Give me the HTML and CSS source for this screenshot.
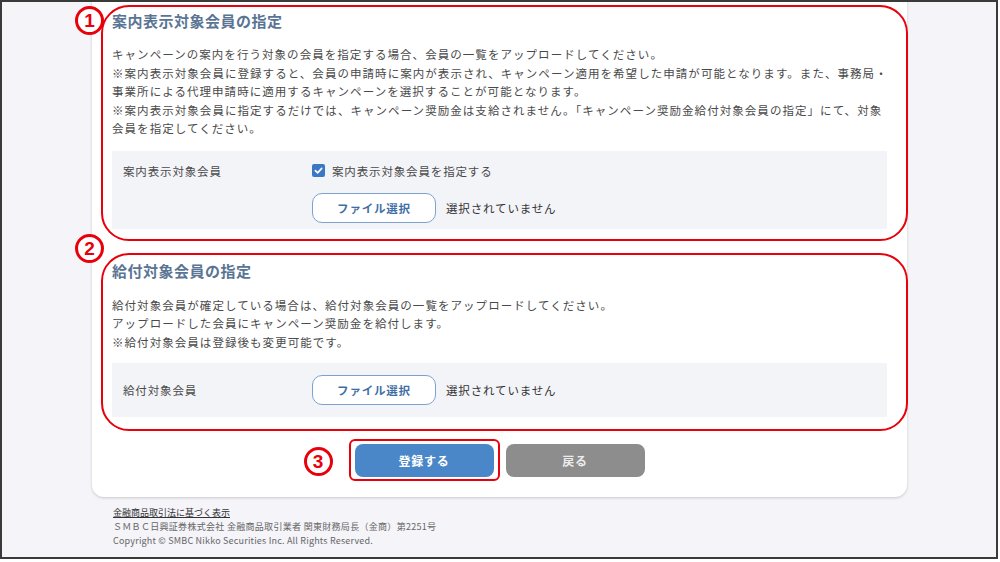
FILE: index.html
```html
<html>
<head>
    <title>キャンペーン会員の指定</title>
    <link rel="stylesheet" href="styles.css">
</head>
<body>
    <div class="frame">
        <div class="card">

            <div class="mark mark-1">
                <span class="num num-1">1</span>
                <h2 class="sec-title">案内表示対象会員の指定</h2>
                <p class="desc">キャンペーンの案内を行う対象の会員を指定する場合、会員の一覧をアップロードしてください。<br>※案内表示対象会員に登録すると、会員の申請時に案内が表示され、キャンペーン適用を希望した申請が可能となります。また、事務局・<br>事業所による代理申請時に適用するキャンペーンを選択することが可能となります。<br>※案内表示対象会員に指定するだけでは、キャンペーン奨励金は支給されません。「キャンペーン奨励金給付対象会員の指定」にて、対象<br>会員を指定してください。</p>
                <div class="form-row row-1">
                    <div class="label">案内表示対象会員</div>
                    <div class="field">
                        <label class="check">
                            <span class="box">
                                <svg width="9" height="9" viewBox="0 0 10 10"><path d="M1.5 5.2 L4 7.6 L8.6 2.6" fill="none" stroke="#fff" stroke-width="1.8" stroke-linecap="round" stroke-linejoin="round"/></svg>
                            </span>
                            案内表示対象会員を指定する
                        </label>
                        <div class="file">
                            <button class="file-btn">ファイル選択</button>
                            <span class="file-name">選択されていません</span>
                        </div>
                    </div>
                </div>
            </div>

            <div class="mark mark-2">
                <span class="num num-2">2</span>
                <h2 class="sec-title">給付対象会員の指定</h2>
                <p class="desc">給付対象会員が確定している場合は、給付対象会員の一覧をアップロードしてください。<br>アップロードした会員にキャンペーン奨励金を給付します。<br>※給付対象会員は登録後も変更可能です。</p>
                <div class="form-row row-2">
                    <div class="label">給付対象会員</div>
                    <div class="field">
                        <div class="file">
                            <button class="file-btn">ファイル選択</button>
                            <span class="file-name">選択されていません</span>
                        </div>
                    </div>
                </div>
            </div>

            <div class="actions">
                <div class="mark-3">
                    <span class="num num-3">3</span>
                    <button class="btn btn-primary">登録する</button>
                </div>
                <button class="btn btn-back">戻る</button>
            </div>
        </div>

        <div class="footer">
            <a class="footer-link">金融商品取引法に基づく表示</a>
            <div class="footer-line">ＳＭＢＣ日興証券株式会社 金融商品取引業者 関東財務局長（金商）第2251号</div>
            <div class="footer-line copy">Copyright © SMBC Nikko Securities Inc. All Rights Reserved.</div>
        </div>
    </div>
</body>
</html>
```

FILE: styles.css
```css
body {
    margin: 0;
    background: #fff;
    font-family: "Noto Sans CJK JP", "Noto Sans", sans-serif;
    color: #444;
}

.frame {
    width: 994px;
    height: 555px;
    border: 2px solid #3a3a3a;
    background: #f4f4f9;
    overflow: hidden;
}

.card {
    width: 775px;
    margin: -12px 0 0 90px;
    padding: 15px 20px 20px 20px;
    background: #fff;
    border-radius: 12px;
    box-shadow: 0 1px 3px rgba(0, 0, 0, 0.18);
}

/* red annotation outlines */
.mark {
    position: relative;
    margin: 0 -21px 0 -11px;
    padding: 0 19px 10px 9px;
    border: 2px solid #e8000b;
    border-radius: 28px;
}

.mark-1 {
    padding-top: 3px;
}

.mark-2 {
    margin-top: 12px;
    padding-top: 5px;
    padding-bottom: 12px;
}

.num {
    position: absolute;
    left: -28px;
    width: 23px;
    height: 23px;
    border: 3px solid #e8000b;
    border-radius: 50%;
    background: #fff;
    color: #e8000b;
    font-family: "Liberation Sans", sans-serif;
    font-weight: bold;
    font-size: 19px;
    line-height: 23px;
    text-align: center;
}

.num-1 { top: -1px; }
.num-2 { top: -21px; }
.num-3 { left: -47px; top: 6px; }

.sec-title {
    margin: 0;
    font-size: 15px;
    line-height: 22px;
    font-weight: bold;
    letter-spacing: 0.5px;
    color: #5a7594;
}

.desc {
    margin: 13px 0 13px 0;
    font-size: 11.5px;
    line-height: 18.5px;
    letter-spacing: 1.05px;
    color: #4a4a4a;
    white-space: nowrap;
}

.mark-2 .desc {
    margin: 14px 0 12px 0;
}

.form-row {
    display: grid;
    grid-template-columns: 189px 1fr;
    padding-left: 11px;
    background: #f3f4f8;
    font-size: 11.5px;
    letter-spacing: 0.85px;
    color: #4a4a4a;
}

.row-1 {
    padding-top: 10px;
    padding-bottom: 6px;
}

.row-1 .label {
    line-height: 20px;
}

.row-2 {
    padding-top: 12px;
    padding-bottom: 12px;
    align-items: center;
}

.check {
    display: flex;
    align-items: center;
    gap: 7px;
    line-height: 20px;
    margin-bottom: 12px;
}

.box {
    display: flex;
    align-items: center;
    justify-content: center;
    width: 13px;
    height: 13px;
    border-radius: 2px;
    background: #3b78c3;
}

.file {
    display: flex;
    align-items: center;
    gap: 10px;
}

.file-btn {
    width: 124px;
    height: 30px;
    border: 1.5px solid #7ba2d1;
    border-radius: 10px;
    background: #fff;
    color: #3f6ea6;
    font-family: inherit;
    font-size: 11.5px;
    font-weight: bold;
    letter-spacing: 0.8px;
}

.file-name {
    color: #333;
}

.actions {
    display: flex;
    justify-content: center;
    gap: 12px;
    margin-top: 13px;
}

.mark-3 {
    position: relative;
    display: flex;
    margin: -5px -6px -4px -6px;
    padding: 3px 4px 2px 4px;
    border: 2px solid #e8000b;
    border-radius: 6px;
}

.btn {
    width: 139px;
    height: 33px;
    border: none;
    border-radius: 8px;
    font-family: inherit;
    font-size: 12px;
    font-weight: bold;
    letter-spacing: 0.8px;
}

.btn-primary {
    background: #4a87c9;
    color: #fff;
}

.btn-back {
    background: #8d8d8d;
    color: #ececec;
}

.footer {
    margin: 9px 0 0 111px;
    font-size: 9px;
    line-height: 14px;
    color: #666;
}

.footer-link {
    display: block;
    color: #333;
    text-decoration: underline;
}

.footer-line {
    letter-spacing: 0.3px;
}

.copy {
    letter-spacing: 0.2px;
}
```
